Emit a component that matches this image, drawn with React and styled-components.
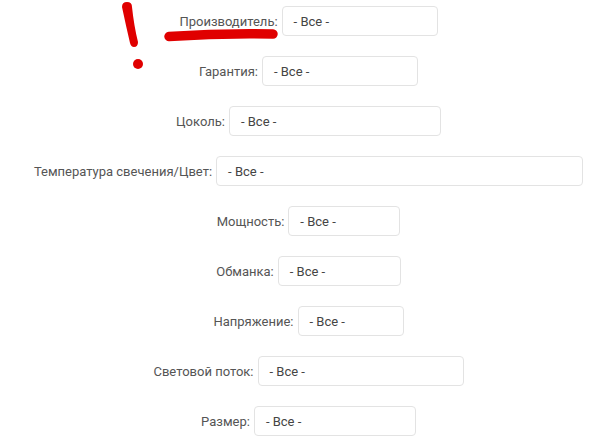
import React from "react";
import styled, { createGlobalStyle } from "styled-components";

const Global = createGlobalStyle`
  html, body { margin: 0; padding: 0; background: #fff; }
  body { font-family: Roboto, "Liberation Sans", Arial, sans-serif; }
`;

const Page = styled.div`
  position: relative;
  width: 590px;
  height: 443px;
  overflow: hidden;
  padding: 6px 0 0 27px;
  box-sizing: border-box;
  display: flex;
  flex-direction: column;
  gap: 20px;
`;

const Row = styled.div`
  display: flex;
  align-items: center;
  justify-content: center;
  gap: 4px;
  height: 30px;
`;

const Label = styled.label`
  font-size: 13px;
  color: #555;
  white-space: nowrap;
`;

const Select = styled.div`
  box-sizing: border-box;
  width: ${(p) => p.$w}px;
  height: 30px;
  border: 1px solid #e3e3e3;
  border-radius: 4px;
  background: #fff;
  display: flex;
  align-items: center;
  padding-left: 11px;
  font-size: 13px;
  color: #444;
`;

const Marks = styled.svg`
  position: absolute;
  left: 0;
  top: 0;
  pointer-events: none;
`;

const rows = [
  ["Производитель:", 156],
  ["Гарантия:", 156],
  ["Цоколь:", 212],
  ["Температура свечения/Цвет:", 367],
  ["Мощность:", 112],
  ["Обманка:", 123],
  ["Напряжение:", 106],
  ["Световой поток:", 206],
  ["Размер:", 162],
];

export default function App() {
  return (
    <>
      <Global />
      <Page>
        {rows.map(([l, w]) => (
          <Row key={l}>
            <Label>{l}</Label>
            <Select $w={w}>- Все -</Select>
          </Row>
        ))}
        <Marks width="590" height="443" viewBox="0 0 590 443">
          <path
            d="M122 7 Q122 2 127 2 Q132 2 132 7 Q134 26 138 42 Q138 47 134 47 Q131 47 130 43 Q126 26 122 7 Z"
            fill="#e00000"
          />
          <circle cx="138" cy="64" r="5" fill="#e00000" />
          <path d="M169 36.5 Q220 33 273 34" stroke="#e00000" strokeWidth="9.5" strokeLinecap="round" fill="none" />
        </Marks>
      </Page>
    </>
  );
}
